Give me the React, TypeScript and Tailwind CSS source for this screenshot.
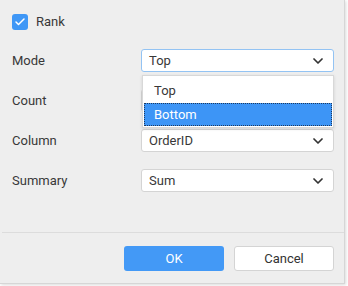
import { Check } from "lucide-react";

const Chevron = () => (
  <svg width="10" height="6" viewBox="0 0 10 6" className="shrink-0">
    <path d="M1 1l4 4 4-4" fill="none" stroke="#333" strokeWidth="1.7" strokeLinecap="round" strokeLinejoin="round" />
  </svg>
);

const Select = ({ value, focused }: { value: string; focused?: boolean }) => (
  <div
    className={`w-[193px] h-[23px] flex items-center justify-between pl-[7px] pr-[10px] bg-white rounded-[3px] border ${
      focused ? "border-[#93c3f3]" : "border-[#d4d4d4]"
    }`}
  >
    <span>{value}</span>
    <Chevron />
  </div>
);

const Row = ({ label, value, focused }: { label: string; value: string; focused?: boolean }) => (
  <div className="flex items-center h-[23px]">
    <span className="w-[129px]">{label}</span>
    <Select value={value} focused={focused} />
  </div>
);

export default function App() {
  return (
    <div className="w-[348px] h-[286px] bg-white" style={{ fontFamily: "Roboto, 'Liberation Sans', sans-serif" }}>
      <div className="relative w-[345px] h-[284px] bg-[#eeeeee] border-r border-b border-[#d6d6d6] shadow-[1px_1px_3px_rgba(0,0,0,0.15)] text-[13px] text-[#383838]">
        <div className="pt-[14px] pl-[12px]">
          <div className="flex items-center h-[16px] gap-[8px]">
            <div className="w-[16px] h-[16px] rounded-[3px] bg-[#3f97f6] flex items-center justify-center">
              <Check className="w-[12px] h-[12px] text-white" strokeWidth={3} />
            </div>
            <span>Rank</span>
          </div>
          <div className="flex flex-col gap-[17px] mt-[19px]">
            <Row label="Mode" value="Top" focused />
            <Row label="Count" value="" />
            <Row label="Column" value="OrderID" />
            <Row label="Summary" value="Sum" />
          </div>
        </div>
        <div className="mt-[40px] ml-[2px] border-t border-[#dcdcdc]" />
        <div className="flex justify-end gap-[10px] pr-[10px] mt-[13px]">
          <button className="w-[100px] h-[25px] rounded-[3px] bg-[#4399f6] text-white">OK</button>
          <button className="w-[100px] h-[25px] rounded-[3px] bg-white border border-[#d4d4d4] text-[#333]">Cancel</button>
        </div>

        <div className="absolute left-[142px] top-[75px] w-[192px] h-[53px] bg-white border border-[#d8d8d8] shadow-[0_1px_3px_rgba(0,0,0,0.12)] pt-[3px] px-[1px]">
          <div className="h-[24px] flex items-center pl-[10px]">Top</div>
          <div className="h-[23px] flex items-center pl-[9px] bg-[#3d95f6] text-white border border-dotted border-[#1e3a5f]">
            Bottom
          </div>
        </div>
      </div>
    </div>
  );
}
